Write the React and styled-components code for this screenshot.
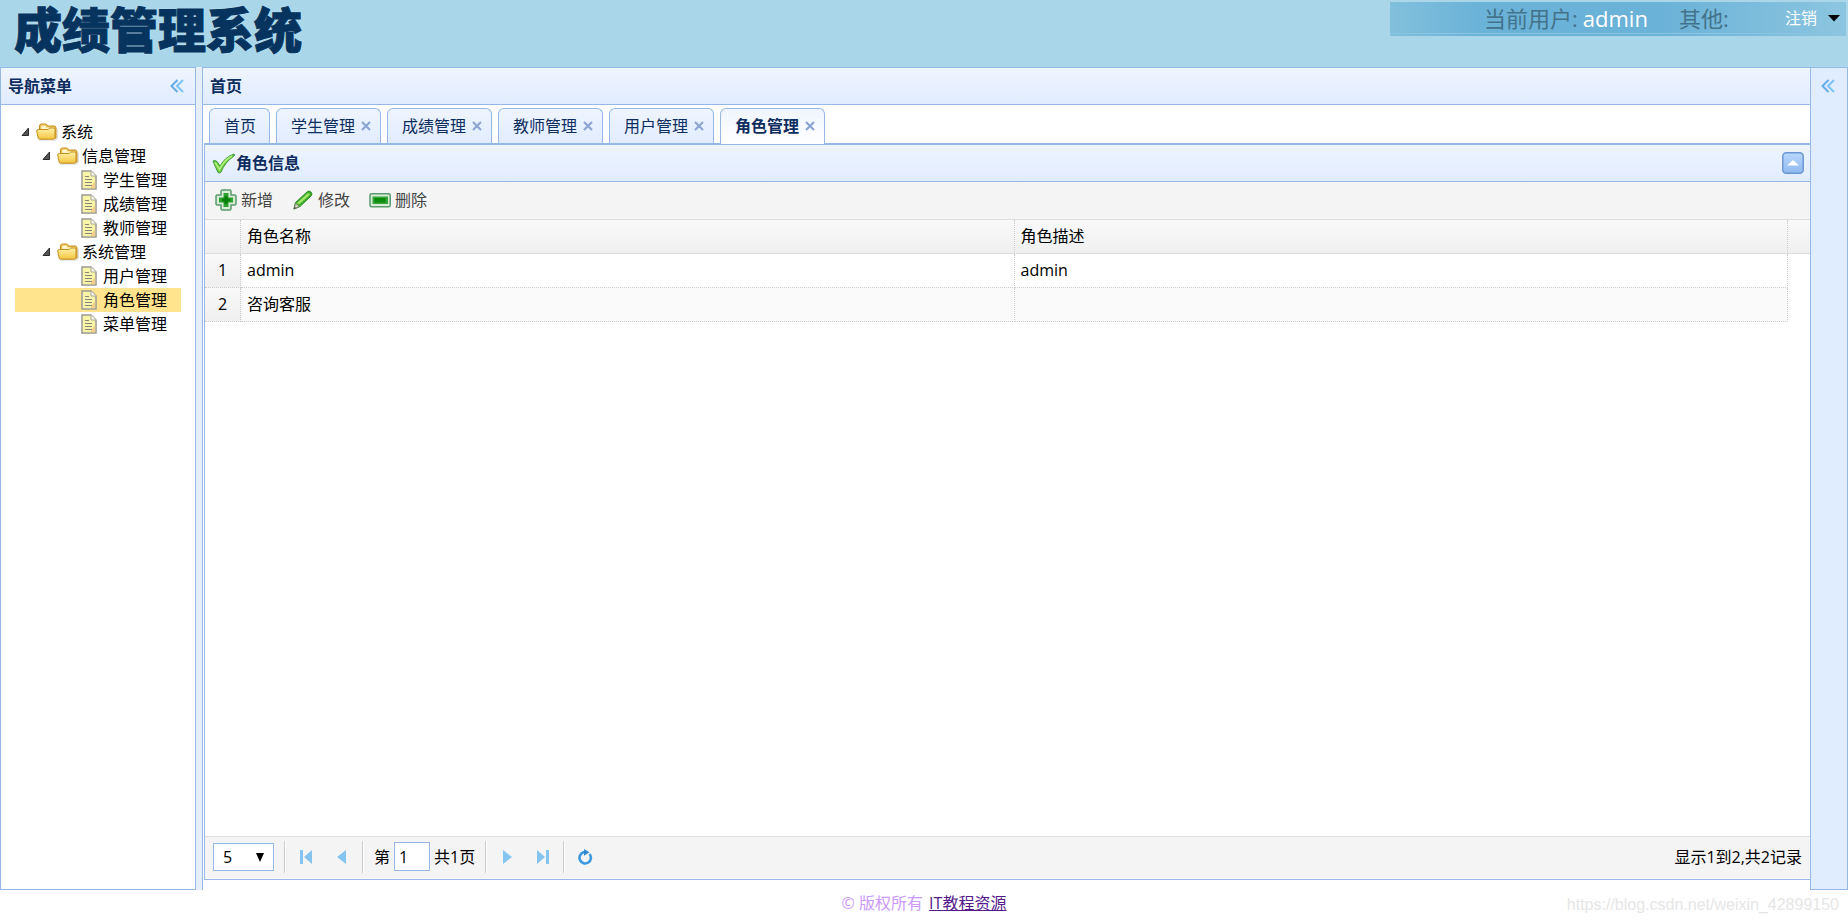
import React, { useState } from 'react'
import styled, { createGlobalStyle } from 'styled-components'

const tabs = ['首页', '学生管理', '成绩管理', '教师管理', '用户管理', '角色管理']

const tree = [
  { text: '系统', level: 0, folder: true },
  { text: '信息管理', level: 1, folder: true },
  { text: '学生管理', level: 2 },
  { text: '成绩管理', level: 2 },
  { text: '教师管理', level: 2 },
  { text: '系统管理', level: 1, folder: true },
  { text: '用户管理', level: 2 },
  { text: '角色管理', level: 2 },
  { text: '菜单管理', level: 2 },
]

const roles = [
  { name: 'admin', desc: 'admin' },
  { name: '咨询客服', desc: '' },
]

const DoubleArrow = () => (
  <svg width="16" height="16" viewBox="0 0 16 16" fill="none" strokeWidth="2">
    <path d="M7.500 2l-6 6 6 6" stroke="#64acea" />
    <path d="M13 2 7 8l6 6" stroke="#7cc3f7" />
  </svg>
)

const Triangle = () => (
  <svg width="9" height="10" viewBox="0 0 9 10">
    <path d="M7.500 1v7.500H1z" fill="#555" stroke="#2b2b2b" strokeLinejoin="round" />
  </svg>
)

const FolderIcon = () => (
  <svg width="22" height="18" viewBox="0 0 22 18">
    <defs>
      <linearGradient id="folder" x1="0" y1="0" x2="0" y2="1">
        <stop offset="0" stopColor="#fff3a8" />
        <stop offset="1" stopColor="#f3c441" />
      </linearGradient>
    </defs>
    <path d="M3 17h17l1.300-2V6" fill="none" stroke="#bbb" strokeOpacity=".6" />
    <path d="M3.500 15V3q0-2 2-2h4q1 0 1.500 1l.5 1H18q2 0 2 2V15z" fill="#ecc351" stroke="#c38c1b" />
    <path d="M5.500 2.500h4l1 2H18v3H5z" fill="#fff6d0" />
    <path d="M.7 8q0-1.500 1.500-1.500h10l1.500-1.500h4q1.300 0 1.300 1.500v8q0 1.700-1.500 1.700h-14q-1 0-1.300-1z" fill="url(#folder)" stroke="#c38c1b" />
  </svg>
)

const FileIcon = () => (
  <svg width="16" height="20" viewBox="0 0 16 20">
    <path d="M1 1h9l5 5v13H1z" fill="#f8f4a8" stroke="#9a9a94" strokeWidth="1.500" />
    <path d="M9 18.200h5.200V11z" fill="#f4cf8c" />
    <path d="M10 1v5h5" fill="#fffdf0" stroke="#a5a59c" />
    <path d="M4 6.500h4M4 9.500h7M4 12.500h7M4 15.500h7" stroke="#85857a" strokeWidth="1.200" />
  </svg>
)

const OkIcon = () => (
  <svg width="23" height="21" viewBox="0 0 23 21">
    <path d="M1 8q2-1 4 .5L8 13Q13 4 22 1q1 1 0 2Q13 9 9 19q-1 1.500-3 .5Q3 13 1 8z" fill="#6ecf3f" stroke="#3e9a3c" />
    <path d="M3 9.500l4.500 7Q12 7 20 3" fill="none" stroke="#b4f27e" strokeWidth="1.500" />
  </svg>
)

const AddIcon = () => (
  <svg width="22" height="22" viewBox="0 0 22 22">
    <path d="M7 1h8l1 1v4h4l1 1v8l-1 1h-4v4l-1 1H7l-1-1v-4H2l-1-1V7l1-1h4V2z" fill="#d9ecd9" stroke="#5a9a6c" strokeWidth="1.500" />
    <path d="M8.500 4h5v4.500H18v5h-4.500V18h-5v-4.500H4v-5h4.500z" fill="#2ca12c" />
    <path d="M9.500 7h3v2.500H15v3h-2.500V15h-3v-2.500H7v-3h2.500z" fill="#088008" />
  </svg>
)

const EditIcon = () => (
  <svg width="22" height="22" viewBox="0 0 22 22">
    <path d="M2 20l1.500-6.500L15 3q2-2 4 0t0 4L8 17.500z" fill="#3fae2a" stroke="#2c8b2c" />
    <path d="M5 14 16 4l2 1.500L7 15.500z" fill="#a6e76b" />
    <path d="M2 20l1.500-6 4 3.500z" fill="#d3d5bd" stroke="#64745a" strokeWidth=".8" />
    <path d="M1.500 20.500l1-3 1.500 1.500z" fill="#555" />
  </svg>
)

const RemoveIcon = () => (
  <svg width="22" height="22" viewBox="0 0 22 22">
    <rect x="1" y="4.800" width="20.200" height="13" rx="1.500" fill="#d9ecd9" stroke="#5a9a6c" strokeWidth="1.500" />
    <rect x="3.500" y="7.500" width="15.500" height="7.500" fill="#35a535" />
    <rect x="5.500" y="9" width="11" height="4.500" fill="#0b8b0b" />
  </svg>
)

const CollapseIcon = () => (
  <svg width="22" height="22" viewBox="0 0 22 22">
    <defs>
      <linearGradient id="tool" x1="0" y1="0" x2="0" y2="1">
        <stop offset="0" stopColor="#b9d7fd" />
        <stop offset="1" stopColor="#8fb9ee" />
      </linearGradient>
    </defs>
    <rect x=".8" y=".8" width="20.400" height="20.400" rx="3.500" fill="url(#tool)" stroke="#6b98d4" strokeWidth="1.500" />
    <path d="M5 13.500 11 8l6 5.500z" fill="#fff" />
  </svg>
)

const CloseIcon = () => (
  <svg width="10" height="10" viewBox="0 0 10 10">
    <path d="M1 1l8 8M9 1L1 9" stroke="#8ba5d3" strokeWidth="2.200" />
  </svg>
)

const PageIcon = ({ bar, flip }) => (
  <svg width="14" height="14" viewBox="0 0 14 14" fill="#86c4f0">
    <g transform={flip ? 'translate(14 0) scale(-1 1)' : undefined}>
      {bar && <rect x="1" y="0" width="3" height="14" />}
      <path d={bar ? 'M13 0v14L5 7z' : 'M11 0v14L2 7z'} />
    </g>
  </svg>
)

const ReloadIcon = () => (
  <svg width="16" height="16" viewBox="0 0 16 16">
    <path d="M8 3.300H6.500A5.700 5.700 0 1 0 12.500 5" fill="none" stroke="#3b9ade" strokeWidth="2.600" />
    <path d="M7 0l5.500 3.300L7 6.800z" fill="#2f8bd0" />
  </svg>
)

const App = () => {
  const [current, setCurrent] = useState('角色管理')

  return (
    <Page>
      <GlobalStyle />
      <Header>
        <Title>成绩管理系统</Title>
        <UserBar>
          <UserLabel>当前用户:</UserLabel>
          <UserName>admin</UserName>
          <UserLabel>其他:</UserLabel>
          <LogoutButton>
            注销
            <svg width="12" height="7" viewBox="0 0 12 7">
              <path d="M0 0h12L6 6.500z" />
            </svg>
          </LogoutButton>
        </UserBar>
      </Header>

      <Body>
        <West>
          <PanelHeader>
            <span>导航菜单</span>
            <ToolButton aria-label="collapse">
              <DoubleArrow />
            </ToolButton>
          </PanelHeader>
          <Tree>
            {tree.map((node) => (
              <TreeNode key={node.text} $level={node.level} $selected={node.text === current}>
                <Slot>{node.folder && <Triangle />}</Slot>
                <Slot>{node.folder ? <FolderIcon /> : <FileIcon />}</Slot>
                <span>{node.text}</span>
              </TreeNode>
            ))}
          </Tree>
        </West>
        <Splitter />

        <Center>
          <PanelHeader>
            <span>首页</span>
          </PanelHeader>
          <CenterBody>
            <TabStrip>
              {tabs.map((tab) => (
                <Tab key={tab} $active={tab === current}>
                  <TabButton onClick={() => setCurrent(tab)}>{tab}</TabButton>
                  {tab !== '首页' && (
                    <TabClose aria-label="close">
                      <CloseIcon />
                    </TabClose>
                  )}
                </Tab>
              ))}
            </TabStrip>

            <GridPanel>
              <PanelHeader>
                <IconTitle>
                  <OkIcon />
                  角色信息
                </IconTitle>
                <ToolButton aria-label="collapse">
                  <CollapseIcon />
                </ToolButton>
              </PanelHeader>
              <Toolbar>
                <ToolbarButton>
                  <AddIcon />
                  新增
                </ToolbarButton>
                <ToolbarButton>
                  <EditIcon />
                  修改
                </ToolbarButton>
                <ToolbarButton>
                  <RemoveIcon />
                  删除
                </ToolbarButton>
              </Toolbar>

              <GridView>
                <Table>
                  <colgroup>
                    <NumberCol />
                    <col />
                    <col />
                    <ScrollCol />
                  </colgroup>
                  <thead>
                    <tr>
                      <th></th>
                      <th>角色名称</th>
                      <th>角色描述</th>
                      <th></th>
                    </tr>
                  </thead>
                  <tbody>
                    {roles.map((role, i) => (
                      <tr key={role.name}>
                        <td>{i + 1}</td>
                        <td>{role.name}</td>
                        <td>{role.desc}</td>
                        <td></td>
                      </tr>
                    ))}
                  </tbody>
                </Table>
              </GridView>

              <Pager>
                <SelectBox>
                  <PageSize aria-label="page size" defaultValue="5">
                    <option>5</option>
                    <option>10</option>
                    <option>20</option>
                  </PageSize>
                  <svg width="8" height="9" viewBox="0 0 8 9">
                    <path d="M0 0h8L4 9z" />
                  </svg>
                </SelectBox>
                <Separator />
                <PageButton aria-label="first"><PageIcon bar /></PageButton>
                <PageButton aria-label="previous"><PageIcon /></PageButton>
                <Separator />
                <PageLabel>
                  第
                  <PageInput type="text" defaultValue="1" />
                  共1页
                </PageLabel>
                <Separator />
                <PageButton aria-label="next"><PageIcon flip /></PageButton>
                <PageButton aria-label="last"><PageIcon bar flip /></PageButton>
                <Separator />
                <PageButton aria-label="reload"><ReloadIcon /></PageButton>
                <PageInfo>显示1到2,共2记录</PageInfo>
              </Pager>
            </GridPanel>
          </CenterBody>
        </Center>

        <East>
          <ToolButton aria-label="expand">
            <DoubleArrow />
          </ToolButton>
        </East>
      </Body>

      <Footer>
        <span>© 版权所有</span>
        <a href="#0">IT教程资源</a>
        <Watermark>https://blog.csdn.net/weixin_42899150</Watermark>
      </Footer>
    </Page>
  )
}

export default App

const GlobalStyle = createGlobalStyle`
  * {
    box-sizing: border-box;
  }
  body {
    margin: 0;
    background: #fff;
    color: #000;
    font-family: "Open Sans", "Noto Sans CJK SC", sans-serif;
    font-size: 16px;
    line-height: 24px;
  }
  button, input, select {
    font: inherit;
    color: inherit;
  }
  button {
    padding: 0;
    border: 0;
    background: none;
    cursor: pointer;
  }
  svg {
    display: block;
    flex: none;
  }
`

const Page = styled.div`
  display: flex;
  flex-direction: column;
  min-height: 100vh;
`

const Header = styled.header`
  display: flex;
  justify-content: space-between;
  align-items: flex-start;
  height: 67px;
  padding: 2px 2px 0 14px;
  background: #a9d7e9;
`

const Title = styled.h1`
  margin: 0;
  color: #06345f;
  font-family: "Liberation Sans", "Noto Sans CJK SC", sans-serif;
  font-size: 48px;
  font-weight: 900;
  line-height: 60px;
  white-space: nowrap;
  -webkit-text-stroke: 1px #06345f;
  text-shadow: 0 0 2px #d5edf6;
`

const UserBar = styled.div`
  display: flex;
  align-items: center;
  width: 456px;
  height: 34px;
  padding: 0 6px 2px 94px;
  background:
    linear-gradient(#8ac4e0, #8ac4e0) 0 31px / 100% 1px no-repeat,
    linear-gradient(90deg, #82c0dc, #6ab2d8 20%, #6ab2d8 58%, #8cc5df);
`

const UserLabel = styled.span`
  color: #43738b;
  font-size: 22px;
`

const UserName = styled.span`
  margin: 0 31px 0 5px;
  color: #fff;
  font-size: 22px;
`

const LogoutButton = styled.button`
  display: flex;
  align-items: center;
  gap: 11px;
  margin-left: auto;
  color: #fff;

  path {
    fill: #000;
  }
`

const Body = styled.div`
  display: flex;
  flex: 1;
`

const West = styled.aside`
  width: 196px;
  border: 1px solid #95b8e7;
`

const Splitter = styled.div`
  width: 6px;
  background: #e6eef8;
`

const PanelHeader = styled.div`
  display: flex;
  justify-content: space-between;
  align-items: center;
  height: 37px;
  padding: 0 6px 0 7px;
  border-bottom: 1px solid #95b8e7;
  background: linear-gradient(#eff5ff, #e0ecff);
  color: #0e2d5f;
  font-weight: bold;
`

const ToolButton = styled.button`
  display: grid;
  place-items: center;
  width: 22px;
  height: 22px;
`

const Tree = styled.ul`
  margin: 0;
  padding: 15px 14px;
  list-style: none;
`

const TreeNode = styled.li`
  display: flex;
  align-items: center;
  height: 24px;
  padding-left: ${(props) => props.$level * 21}px;
  background: ${(props) => (props.$selected ? '#ffe48d' : 'transparent')};
  cursor: pointer;

  span:last-child {
    margin-left: 4px;
  }
`

const Slot = styled.span`
  display: grid;
  place-items: center;
  width: 21px;
`

const Center = styled.main`
  display: flex;
  flex: 1;
  flex-direction: column;
  min-width: 0;
  border: 1px solid #95b8e7;
  border-width: 1px 0 0 1px;
`

const CenterBody = styled.div`
  display: flex;
  flex: 1;
  flex-direction: column;
  padding: 0 0 10px 1px;
`

const TabStrip = styled.div`
  display: flex;
  align-items: flex-end;
  gap: 6px;
  height: 39px;
  padding-left: 5px;
  border-bottom: 1px solid #95b8e7;
`

const Tab = styled.div`
  display: flex;
  align-items: center;
  gap: 6px;
  height: ${(props) => (props.$active ? '36px' : '35px')};
  margin-bottom: ${(props) => (props.$active ? '-1px' : '0')};
  padding: 0 9px ${(props) => (props.$active ? '1px' : '0')} 14px;
  border: 1px solid #95b8e7;
  border-bottom: 0;
  border-radius: 6px 6px 0 0;
  background: ${(props) => (props.$active ? 'linear-gradient(#eff5ff, #fff)' : 'linear-gradient(#eff5ff, #e0ecff)')};
  color: #0e2d5f;
  font-weight: ${(props) => (props.$active ? 'bold' : 'normal')};

  &:first-child {
    padding-right: 13px;
  }
`

const TabButton = styled.button`
  white-space: nowrap;
`

const TabClose = styled.button``

const GridPanel = styled.section`
  display: flex;
  flex: 1;
  flex-direction: column;
  padding-bottom: 1px;
  border: 1px solid #95b8e7;
  border-right: 0;
`

const IconTitle = styled.span`
  display: flex;
  align-items: center;
  gap: 1px;
`

const Toolbar = styled.div`
  display: flex;
  gap: 1px;
  height: 38px;
  padding: 0 0 2px 1px;
  border-bottom: 1px solid #ddd;
  background: #f4f4f4;
`

const ToolbarButton = styled.button`
  display: flex;
  align-items: center;
  gap: 4px;
  padding: 0 9px;
  color: #444;
`

const GridView = styled.div`
  flex: 1;
`

const Table = styled.table`
  width: 100%;
  border-spacing: 0;
  table-layout: fixed;

  th, td {
    height: 34px;
    padding: 0 6px 2px;
    border: 0 dotted #ccc;
    border-width: 0 1px 1px 0;
    font-weight: normal;
    text-align: left;
  }
  thead tr {
    background: linear-gradient(#f9f9f9, #efefef);
  }
  th {
    border-bottom: 1px solid #ddd;
  }
  td:first-child {
    padding: 0 0 2px;
    background: linear-gradient(#f9f9f9, #efefef);
    text-align: center;
  }
  tbody tr:nth-child(even) {
    background: #fafafa;
  }
  th:last-child {
    border-right: 0;
  }
  td:last-child {
    border: 0;
    background: #fff;
  }
`

const NumberCol = styled.col`
  width: 36px;
`

const ScrollCol = styled.col`
  width: 22px;
`

const Pager = styled.div`
  display: flex;
  align-items: center;
  height: 42px;
  padding: 0 8px 2px;
  border-top: 1px solid #ddd;
  background: #f4f4f4;
`

const SelectBox = styled.div`
  position: relative;
  margin-right: 8px;

  svg {
    position: absolute;
    top: 10px;
    right: 10px;
    pointer-events: none;
  }
`

const PageSize = styled.select`
  display: block;
  width: 61px;
  height: 28px;
  padding: 0 9px;
  border: 1px solid #95b8e7;
  border-radius: 0;
  background: #fff;
  appearance: none;
`

const Separator = styled.div`
  width: 2px;
  height: 32px;
  margin: 0 2px;
  border-left: 1px solid #ccc;
  border-right: 1px solid #fff;
`

const PageButton = styled.button`
  display: grid;
  place-items: center;
  width: 36px;
  height: 32px;
`

const PageLabel = styled.label`
  display: flex;
  align-items: center;
  gap: 4px;
  padding: 0 8px;
`

const PageInput = styled.input`
  width: 36px;
  height: 29px;
  padding: 0 4px;
  border: 1px solid #95b8e7;
`

const PageInfo = styled.div`
  margin-left: auto;
`

const East = styled.aside`
  display: flex;
  justify-content: center;
  align-items: flex-start;
  width: 38px;
  padding-top: 7px;
  border: 1px solid #95b8e7;
  background: #e0ecff;
`

const Footer = styled.footer`
  position: relative;
  display: flex;
  justify-content: center;
  gap: 6px;
  height: 33px;
  padding-top: 1px;
  color: #cc99ff;

  a {
    color: #551a8b;
  }
`

const Watermark = styled.span`
  position: absolute;
  top: 3px;
  right: 9px;
  color: #e6e6e6;
  font-family: "Liberation Sans", sans-serif;
`
